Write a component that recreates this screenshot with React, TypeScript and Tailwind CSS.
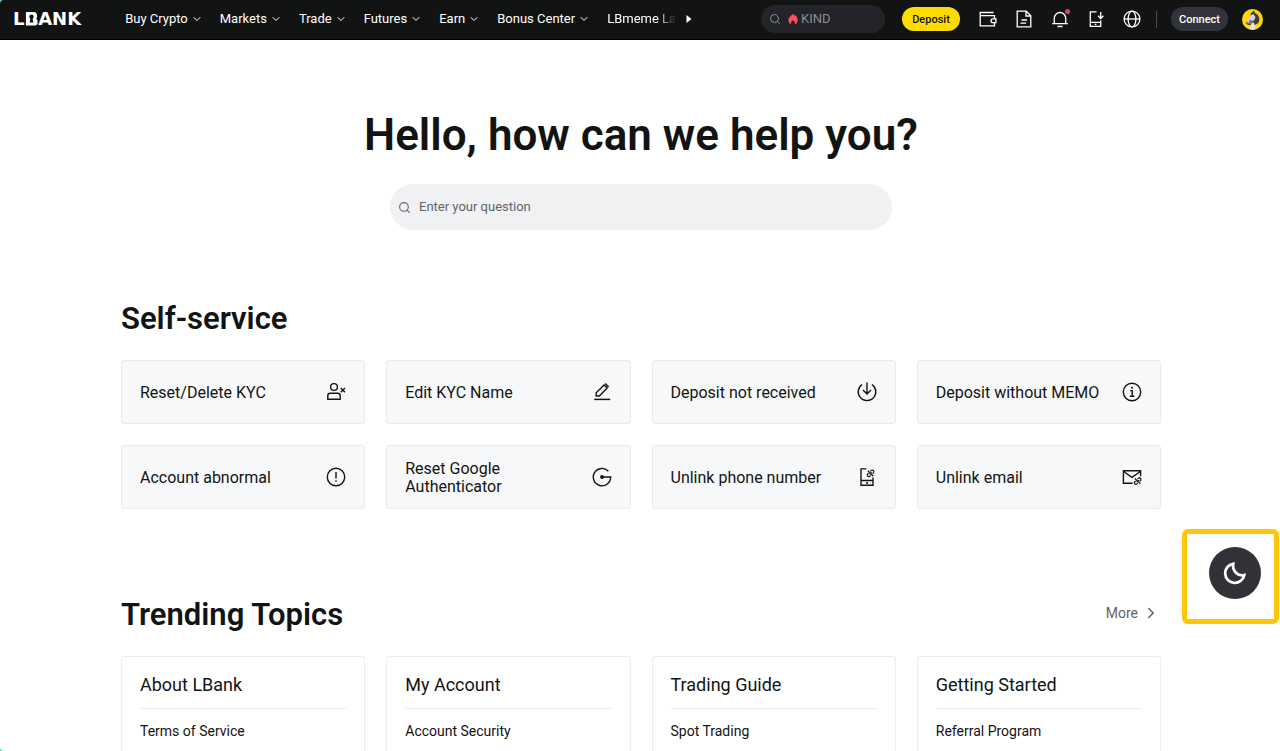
import type { ReactNode } from 'react'
import { ChevronDown, ChevronRight, Search } from 'lucide-react'

const navItems = ['Buy Crypto', 'Markets', 'Trade', 'Futures', 'Earn', 'Bonus Center']

const topics = [
  { title: 'About LBank', item: 'Terms of Service' },
  { title: 'My Account', item: 'Account Security' },
  { title: 'Trading Guide', item: 'Spot Trading' },
  { title: 'Getting Started', item: 'Referral Program' },
]

function HeaderIcon({ children }: { children: ReactNode }) {
  return (
    <svg viewBox="0 0 18 18" className="size-[18px]" fill="none" stroke="currentColor" strokeWidth="1.3">
      {children}
    </svg>
  )
}

function CardIcon({ children }: { children: ReactNode }) {
  return (
    <svg viewBox="0 0 20 20" className="size-5 shrink-0" fill="none" stroke="currentColor" strokeWidth="1.4">
      {children}
    </svg>
  )
}

// small broken chain used on the "unlink" icons
function BrokenLink() {
  return (
    <g strokeWidth="1.2">
      <path d="M3.2 1.4 4 .6a1.5 1.5 0 0 1 2.2 2.2l-.9.9M3.4 5.4l-.8.8A1.5 1.5 0 0 1 .5 4l.9-.9" />
      <path d="M.6.8l5.6 5.4M2.4 4.4l2-2" />
    </g>
  )
}

const services = [
  {
    label: 'Reset/Delete KYC',
    icon: (
      <CardIcon>
        <circle cx="8" cy="5" r="3.4" />
        <path d="M1.8 17.3v-3.6a2.4 2.4 0 0 1 2.4-2.4h7.6a2.4 2.4 0 0 1 2.4 2.4v3.6z" />
        <path d="M14.8 6l4.2 4.2M19 6l-4.2 4.2" />
      </CardIcon>
    ),
  },
  {
    label: 'Edit KYC Name',
    icon: (
      <CardIcon>
        <path d="M2.2 17.4h16" strokeWidth="1.5" />
        <path d="M4.2 14v-3.2l7.9-7.9 3.1 3.1L7.3 14z" />
        <path d="M13.2 1.6l3.4 3.4" />
      </CardIcon>
    ),
  },
  {
    label: 'Deposit not received',
    icon: (
      <CardIcon>
        <path d="M14.9 2.5a8.8 8.8 0 1 1-9.8 0" />
        <path d="M10 .5v11.2M6 8l4 4 4-4" />
      </CardIcon>
    ),
  },
  {
    label: 'Deposit without MEMO',
    icon: (
      <CardIcon>
        <circle cx="10" cy="10" r="8.7" />
        <path d="M8.2 8.6h2v5.6M7.8 14.3h4.6" />
        <circle cx="10" cy="5.8" r="1" fill="currentColor" stroke="none" />
      </CardIcon>
    ),
  },
  {
    label: 'Account abnormal',
    icon: (
      <CardIcon>
        <circle cx="10" cy="10" r="8.7" />
        <path d="M10 5v6.6M10 13.2v1.6" />
      </CardIcon>
    ),
  },
  {
    label: 'Reset Google Authenticator',
    icon: (
      <CardIcon>
        <path d="M16.4 4.2A8.7 8.7 0 1 0 18.7 10H10" />
        <circle cx="10" cy="10" r="1.9" fill="currentColor" stroke="none" />
      </CardIcon>
    ),
  },
  {
    label: 'Unlink phone number',
    icon: (
      <CardIcon>
        <path d="M9.5 1.9H4v16.4h12v-7.8M4 13.5h12" />
        <path d="M9.3 16h1.6" strokeWidth="1.8" />
        <g transform="translate(10.2 3)">
          <BrokenLink />
        </g>
      </CardIcon>
    ),
  },
  {
    label: 'Unlink email',
    icon: (
      <CardIcon>
        <path d="M10.5 16.3H1.4V3.7h17.2v5.6M1.6 4.5 10 10.3l8.4-5.8" />
        <g transform="translate(12.3 10.7)">
          <BrokenLink />
        </g>
      </CardIcon>
    ),
  },
]

function Logo() {
  return (
    <a href="/" className="relative block shrink-0 font-['DejaVu_Sans',sans-serif] text-[18px] leading-5 font-bold">
      LBANK
      {/* keyhole cut into the B */}
      <svg viewBox="0 0 14 14" className="absolute top-[3px] left-3 size-[14px]">
        <path d="M1 .5h9.5l1.5 2v3l-1 1.2 1.5 1.8v3.500l-1.500 1.500H1z" fill="#fff" />
        <circle cx="6.5" cy="4.8" r="2.2" fill="#121413" />
        <path d="M5.6 6h1.800l1 4.500H4.600z" fill="#121413" />
      </svg>
    </a>
  )
}

function Header() {
  return (
    <header className="flex h-10 items-center border-b border-black bg-[#121413] pr-[17px] pb-px pl-[13px] text-white">
      <Logo />
      <nav className="ml-[44px] flex min-w-0 flex-1 items-center gap-[17px] overflow-hidden text-[13px] leading-5 whitespace-nowrap">
        {navItems.map((item) => (
          <button key={item} className="flex shrink-0 items-center gap-[3px]">
            {item}
            <ChevronDown className="size-3" strokeWidth={2} />
          </button>
        ))}
        <button className="shrink-0 [mask-image:linear-gradient(to_right,#000_72%,transparent)]">LBmeme La</button>
      </nav>
      <button aria-label="More menu items" className="ml-2">
        <svg viewBox="0 0 6 8" className="h-2 w-[6px]">
          <path d="M.5 0v8L5.5 4z" fill="currentColor" />
        </svg>
      </button>

      <div className="ml-[69px] flex shrink-0 items-center">
        <label className="flex h-7 w-[124px] items-center rounded-full bg-[#23242a] pl-2 text-[#8b8d96]">
          <Search className="size-3 shrink-0" strokeWidth={2} />
          <svg viewBox="0 0 10 12" className="ml-[7px] h-3 w-[10px] shrink-0">
            <path
              d="M5 .5c.3 1 1 1.5 1.6 2.2l.6-.8C8.6 3.2 9.7 5 9.7 7c0 2.2-1.2 3.9-3 4.6.8-1.7.2-3-1.7-4.3-1.9 1.3-2.5 2.6-1.7 4.3C1.5 10.9.3 9.2.3 7 .3 4.3 3.2 3.2 5 .5z"
              fill="#ff4d5b"
            />
          </svg>
          <input
            aria-label="Search"
            placeholder="KIND"
            className="ml-[3px] w-full min-w-0 bg-transparent text-[13px] outline-none placeholder:text-[#8b8d96]"
          />
        </label>
        <button className="ml-[17px] h-6 w-[58px] rounded-full bg-[#ffdc00] pt-0.5 text-[11px] font-medium text-[#121413]">
          Deposit
        </button>
        <div className="ml-[19px] flex gap-[18px]">
          <button aria-label="Wallet">
            <HeaderIcon>
              <path d="M14.6 2.5H1.2v13.4h14.3v-3.2M1.2 5.6h14.3v3.2" />
              <path d="M16.9 8.8h-3a1.9 1.9 0 0 0 0 3.8h3z" />
            </HeaderIcon>
          </button>
          <button aria-label="Orders">
            <HeaderIcon>
              <path d="M2.2 1.2h9l4.6 4.6v11H2.2zM11 1.2V6h4.8" />
              <path d="M6.5 10h5.6M5.5 13.2h5.6" />
            </HeaderIcon>
          </button>
          <button aria-label="Notifications" className="relative">
            <HeaderIcon>
              <path d="M3.3 13.5V8.2a5.7 5.7 0 0 1 11.4 0v5.3M1.2 13.6h15.6M6.5 16.5h5" />
            </HeaderIcon>
            <span className="absolute -top-px -right-px size-[5px] rounded-full bg-[#e0405f]" />
          </button>
          <button aria-label="Download app">
            <HeaderIcon>
              <path d="M9.5 1.8H3.3v14.5h10.4v-6M3.3 12.4h10.4" />
              <path d="M7.8 14.4h1.6M13.7 2v6M11 5.8l2.7 2.7 2.7-2.7" />
            </HeaderIcon>
          </button>
          <button aria-label="Language">
            <HeaderIcon>
              <circle cx="9" cy="9" r="7.9" />
              <ellipse cx="9" cy="9" rx="3.9" ry="7.9" />
              <path d="M1.1 9h15.8" />
            </HeaderIcon>
          </button>
        </div>
        <span className="mr-[14px] ml-[15px] h-[17px] w-px bg-[#4a4b52]" />
        <button className="h-6 w-[57px] rounded-full bg-[#33343b] pt-0.5 text-[11px] font-medium">Connect</button>
        <button aria-label="Profile" className="ml-[14px]">
          <svg viewBox="0 0 21 21" className="size-[21px]">
            <circle cx="10.5" cy="10.5" r="10.5" fill="#ffd60a" />
            <path d="M9 4l3-2.5 1 2.5 3 2 1.5 4-1 4-4 2H6l-2.5-2.5L8 11z" fill="#3a3b3f" />
            <path d="M8.5 6.5l3-1.5 2 3.5-1.5 3-4 1-1 2-2.5-1L7 10z" fill="#d3d5d9" />
            <path d="M9.5 14l2.5-.5 1.5 7h-6z" fill="#e9e4d3" />
            <path d="M8 10.5l3 1.5-1.5 3-4 .5z" fill="#77797d" />
          </svg>
        </button>
      </div>
    </header>
  )
}

export default function App() {
  return (
    <div className="bg-[#55c5cd] font-[Roboto,sans-serif] text-[#121413]">
      <div className="flex min-h-screen flex-col overflow-hidden rounded-l-[4px] bg-white">
        <Header />

        <main className="flex flex-1 flex-col pr-[119px] pl-[121px]">
          <h1 className="mt-[69px] text-center text-[44px] leading-[52px] font-semibold">
            Hello, how can we help you?
          </h1>
          <label className="mx-auto mt-[23px] flex h-[46px] w-full max-w-[502px] items-center gap-2 rounded-full bg-[#f0f1f3] px-2 text-[#62646b]">
            <Search className="size-[13px] shrink-0" strokeWidth={2} />
            <input
              aria-label="Enter your question"
              placeholder="Enter your question"
              className="w-full bg-transparent text-[13px] outline-none placeholder:text-[#62646b]"
            />
          </label>

          <section>
            <h2 className="mt-[69px] text-[31px] leading-10 font-semibold">Self-service</h2>
            <div className="mt-[21px] grid grid-cols-4 gap-[21px]">
              {services.map((service) => (
                <button
                  key={service.label}
                  className="flex h-16 items-center justify-between gap-4 rounded-[3px] border border-[#e9ebee] bg-[#f7f8fa] px-[18px] text-left text-[16px] leading-[18px]"
                >
                  <span className="pt-0.5">{service.label}</span>
                  {service.icon}
                </button>
              ))}
            </div>
          </section>

          <section className="flex flex-1 flex-col">
            <div className="mt-[86px] flex items-center justify-between">
              <h2 className="text-[31px] leading-10 font-semibold">Trending Topics</h2>
              <a href="#topics" className="flex items-center gap-1 pr-px pb-1 text-[14px] leading-5 text-[#62646b]">
                More
                <ChevronRight className="size-[18px]" strokeWidth={2} />
              </a>
            </div>
            <div id="topics" className="mt-[21px] grid flex-1 grid-cols-4 gap-[21px]">
              {topics.map((topic) => (
                <div key={topic.title} className="rounded-t-[3px] border border-b-0 border-[#eceded] px-[18px]">
                  <h3 className="border-b border-[#e9ebee] pt-[18px] pb-[13px] text-[18px] leading-5">
                    {topic.title}
                  </h3>
                  <a href="#topics" className="mt-3 block text-[14px] leading-5">
                    {topic.item}
                  </a>
                </div>
              ))}
            </div>
          </section>
        </main>
      </div>

      <div className="fixed top-[529px] right-px flex h-[95px] w-[97px] items-center justify-end rounded-[6px] border-5 border-[#ffc40c] pr-[13px] pb-[7px]">
        <button
          aria-label="Switch to dark mode"
          className="flex size-[52px] items-center justify-center rounded-full bg-[#313238] text-white"
        >
          <svg viewBox="0 0 24 24" className="size-6" fill="none" stroke="currentColor" strokeWidth="2.8">
            <path d="M10.2 2.8A9.6 9.6 0 1 0 21.2 14.2C15 15.6 9 9.800 10.200 2.800z" />
          </svg>
        </button>
      </div>
    </div>
  )
}
